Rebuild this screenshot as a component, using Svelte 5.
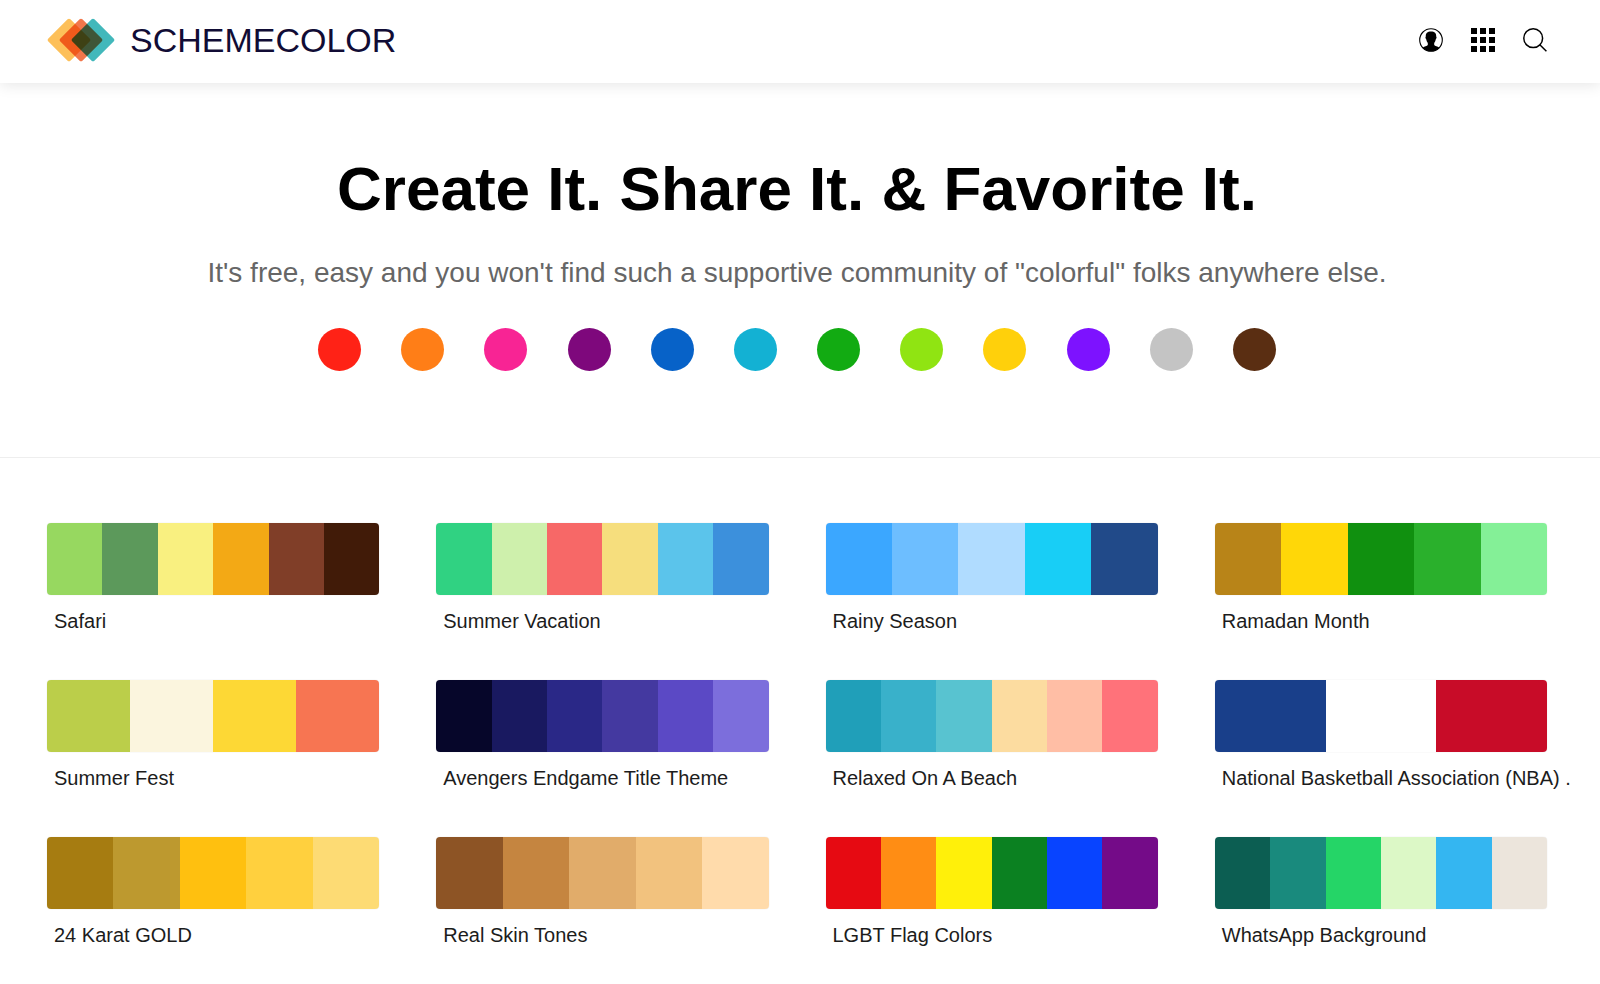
<script>
  const dots = [
    { name: 'Red', color: '#ff2216' },
    { name: 'Orange', color: '#ff7e17' },
    { name: 'Pink', color: '#f82494' },
    { name: 'Purple', color: '#7e087c' },
    { name: 'Blue', color: '#0762c8' },
    { name: 'Cyan', color: '#13b1d3' },
    { name: 'Green', color: '#12ab12' },
    { name: 'Lime', color: '#90e412' },
    { name: 'Yellow', color: '#ffd00b' },
    { name: 'Violet', color: '#7d12ff' },
    { name: 'Gray', color: '#c4c4c4' },
    { name: 'Brown', color: '#5a2e12' }
  ];

  const schemes = [
    { name: 'Safari', colors: ['#97d860', '#5c995b', '#f9f080', '#f3a915', '#803e28', '#411b08'] },
    { name: 'Summer Vacation', colors: ['#30d282', '#cef0ac', '#f76867', '#f6de7d', '#5bc4eb', '#3c90dc'] },
    { name: 'Rainy Season', colors: ['#3ba7ff', '#6dbeff', '#b0dcff', '#18cef6', '#214a89'] },
    { name: 'Ramadan Month', colors: ['#b88418', '#ffd708', '#10900f', '#2ab02c', '#84f097'] },
    { name: 'Summer Fest', colors: ['#bbce4a', '#fbf5de', '#fdd835', '#f77552'] },
    { name: 'Avengers Endgame Title Theme', colors: ['#06062a', '#191960', '#2a2887', '#4439a0', '#5b49c5', '#7c6edc'] },
    { name: 'Relaxed On A Beach', colors: ['#209fb9', '#39b1ca', '#58c3d0', '#fcdca0', '#ffbea5', '#ff727a'] },
    { name: 'National Basketball Association (NBA) .', colors: ['#193f8a', '#ffffff', '#c80c28'] },
    { name: '24 Karat GOLD', colors: ['#a67c11', '#bd992f', '#ffc00f', '#ffd03e', '#fddb74'] },
    { name: 'Real Skin Tones', colors: ['#8d5425', '#c58540', '#e1ac6a', '#f2c27e', '#ffdbab'] },
    { name: 'LGBT Flag Colors', colors: ['#e60a12', '#ff8d14', '#fff00a', '#0b8121', '#0844ff', '#740b88'] },
    { name: 'WhatsApp Background', colors: ['#0c5e52', '#198a7d', '#25d567', '#dcf8c6', '#34b6f1', '#ece5dc'] }
  ];
</script>

<header class="header">
  <a class="brand" href="/">
    <svg class="brand-mark" width="68" height="44" viewBox="0 0 68 44" aria-hidden="true">
      <rect x="6.4" y="6.4" width="31.2" height="31.2" rx="2" fill="#fdc05a" transform="rotate(45 22 22)" />
      <rect x="18.4" y="6.4" width="31.2" height="31.2" rx="2" fill="#f2774c" transform="rotate(45 34 22)" />
      <rect x="30.4" y="6.4" width="31.2" height="31.2" rx="2" fill="#42b8bb" transform="rotate(45 46 22)" />
    </svg>
    <span>SCHEMECOLOR</span>
  </a>

  <nav class="actions">
    <button aria-label="Account">
      <svg width="24" height="24" viewBox="0 0 24 24">
        <circle cx="12" cy="12" r="11.3" fill="none" stroke="#000" stroke-width="1.1" />
        <path d="M12 3.4c-3.7 0-5.4 1.8-5.2 5-.6.5-.4 2.1.3 2.7.3 1.6.9 2.9 1.7 3.8v2.2c-.8 1.3-3.3 1.4-5.1 2.6A11.4 11.4 0 0 0 12 23.3a11.4 11.4 0 0 0 8.3-3.6c-1.8-1.2-4.3-1.3-5.1-2.6v-2.2c.8-.9 1.4-2.2 1.7-3.8.7-.6.9-2.2.3-2.7.2-3.2-1.5-5-5.2-5z" />
      </svg>
    </button>
    <button aria-label="Menu">
      <svg width="24" height="24" viewBox="0 0 24 24">
        {#each [0, 9, 18] as y}
          {#each [0, 9, 18] as x}
            <rect {x} {y} width="6" height="6" />
          {/each}
        {/each}
      </svg>
    </button>
    <button aria-label="Search">
      <svg width="24" height="24" viewBox="0 0 24 24" fill="none" stroke="#000" stroke-width="1.5">
        <circle cx="10.2" cy="10.2" r="9.4" />
        <path d="M16.8 16.8l6.6 6.4" />
      </svg>
    </button>
  </nav>
</header>

<main>
  <section class="hero">
    <h1>Create It. Share It. &amp; Favorite It.</h1>
    <p>It's free, easy and you won't find such a supportive community of "colorful" folks anywhere else.</p>
    <div class="dots">
      {#each dots as dot}
        <a class="dot" href="#{dot.name.toLowerCase()}" aria-label={dot.name} style="background: {dot.color}"></a>
      {/each}
    </div>
  </section>

  <section class="schemes">
    {#each schemes as scheme}
      <a class="scheme" href="/">
        <div class="swatch">
          {#each scheme.colors as color}
            <span style="background: {color}"></span>
          {/each}
        </div>
        <div class="name">{scheme.name}</div>
      </a>
    {/each}
  </section>
</main>

<style>
  :global(body) {
    background: #fff;
    font-family: "Liberation Sans", Arial, sans-serif;
  }

  .header {
    display: flex;
    align-items: center;
    justify-content: space-between;
    height: 83px;
    padding: 0 53px 4px 47px;
    box-sizing: border-box;
    box-shadow: 0 2px 14px rgba(0, 0, 0, 0.1);
  }

  .brand {
    display: flex;
    align-items: center;
    gap: 15px;
    color: #110c35;
    font-size: 34px;
    line-height: 40px;
    text-decoration: none;
  }

  .brand-mark {
    isolation: isolate;
  }

  .brand-mark rect {
    mix-blend-mode: multiply;
  }

  .actions {
    display: flex;
    gap: 28px;
  }

  .actions button {
    padding: 0;
    border: none;
    background: none;
    cursor: pointer;
  }

  .actions svg {
    display: block;
  }

  .hero {
    padding: 70px 6px 86px 0;
    border-bottom: 1px solid #eee;
    text-align: center;
  }

  h1 {
    margin: 0;
    font-size: 62px;
    line-height: 72px;
    color: #000;
  }

  p {
    margin: 28px 0 36px;
    font-size: 28px;
    line-height: 39px;
    color: #666;
  }

  .dots {
    display: flex;
    justify-content: space-between;
    max-width: 958px;
    margin: 0 auto;
  }

  .dot {
    width: 43px;
    height: 43px;
    border-radius: 50%;
  }

  .schemes {
    display: grid;
    grid-template-columns: repeat(4, minmax(0, 1fr));
    gap: 48px 57px;
    padding: 65px 53px 20px 47px;
  }

  .scheme {
    color: #1c1c1c;
    text-decoration: none;
  }

  .swatch {
    display: flex;
    height: 72px;
    border-radius: 4px;
    overflow: hidden;
    box-shadow: 0 0 1px rgba(0, 0, 0, 0.2);
  }

  .swatch span {
    flex: 1;
  }

  .name {
    padding: 15px 0 0 7px;
    font-size: 20px;
    line-height: 22px;
    white-space: nowrap;
  }
</style>
